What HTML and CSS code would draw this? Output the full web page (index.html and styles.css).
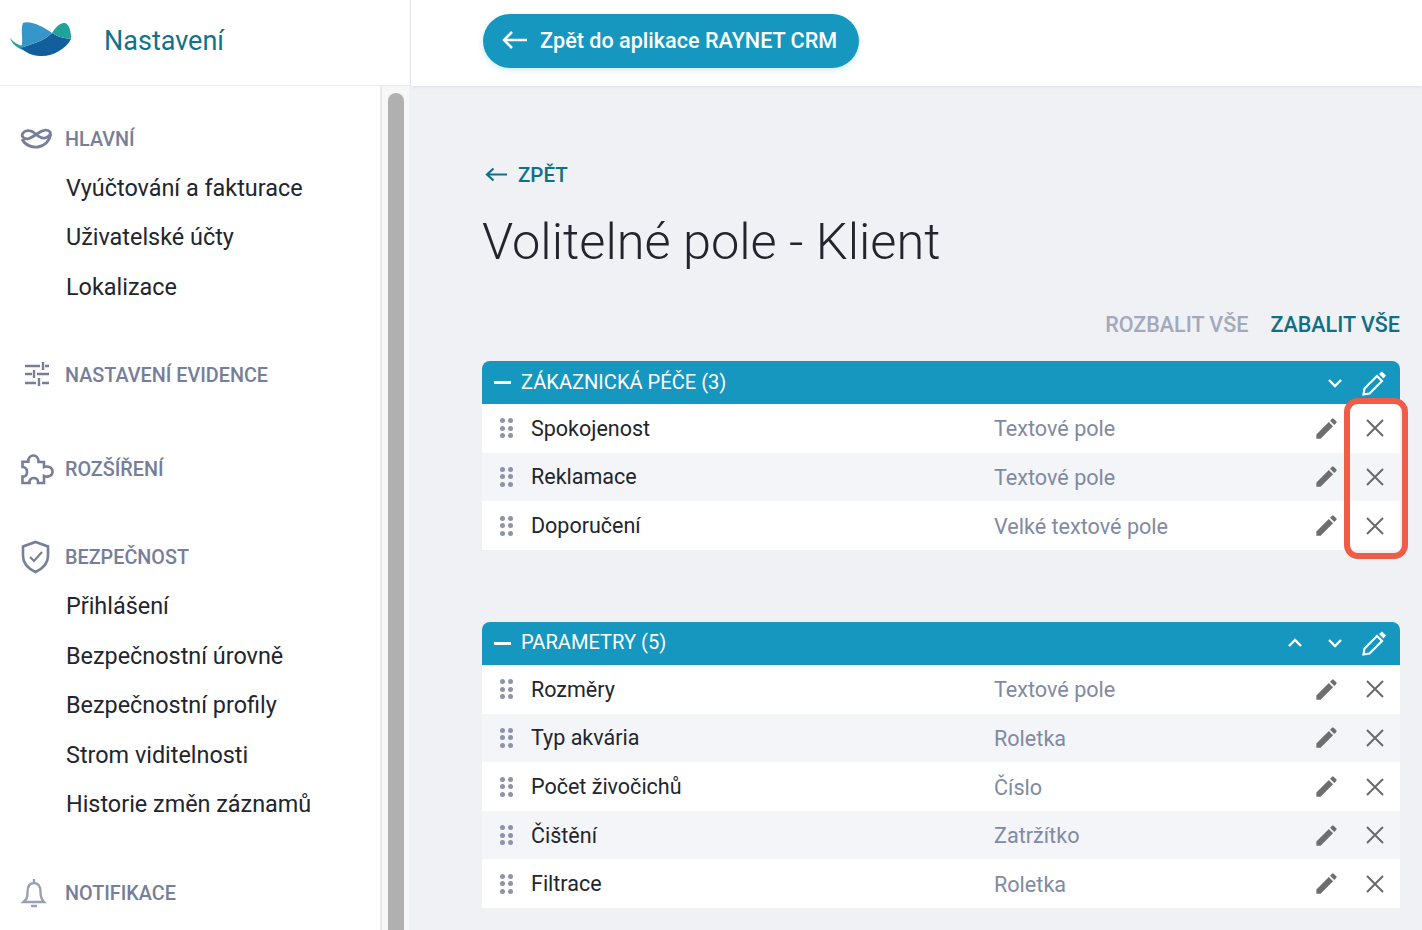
FILE: index.html
```html
<!DOCTYPE html>
<html lang="cs">
<head>
<meta charset="utf-8">
<title>Nastavení</title>
<link rel="stylesheet" href="styles.css">
</head>
<body>
<div class="app">
  <div class="brand">
    <svg class="logo" viewBox="0 0 82 60" width="82" height="60">
      <path fill="#1fa09f" d="M10 38C13 42 18 45 23 46l3 5C18 49 12 44 10 38Z"/>
      <path fill="#135f9c" d="M21 48C32 44 44 41 52 33C58 37 64 38 71 39C66 49 52 57 40 56C32 56 25 52 21 48Z"/>
      <path fill="#3695c9" d="M23 23C30 20 44 27 52 33C44 41 32 44 21 48C24 40 20 30 23 23Z"/>
      <path fill="#21a39c" d="M52 33C55 28 60 22 65 23C70 25 71 32 71 39C64 38 58 37 52 33Z"/>
    </svg>
    <span class="brand-title">Nastavení</span>
  </div>
  <header class="topbar">
    <a class="back-app">
      <svg viewBox="0 0 28 20" width="28" height="20"><path d="M26 10H3M11 2l-8 8 8 8" fill="none" stroke="#fff" stroke-width="2.6"/></svg>
      Zpět do aplikace RAYNET CRM
    </a>
  </header>
  <aside class="sidebar">
    <nav class="nav">
      <div class="nav-head nav-first">
        <svg viewBox="0 0 34 22" width="34" height="22"><path d="M8 11C3 11 1 8 3 5C5 2 10 2 13 4C17 7 20 11 25 10C29 9 31 6 30 4C28 1 23 2 20 4C17 6 13 9 8 11M2 11C5 17 12 20 18 19C24 18 29 14 31 6" fill="none" stroke="#767e9a" stroke-width="2.8"/></svg>
        HLAVNÍ
      </div>
      <a class="nav-item">Vyúčtování a fakturace</a>
      <a class="nav-item">Uživatelské účty</a>
      <a class="nav-item">Lokalizace</a>

      <div class="nav-head nav-gap-a">
        <svg class="icon-sliders" viewBox="0 0 34 26" width="34" height="26"><path d="M5 5h15M25 5h4M23 1v8M5 13h7M17 13h12M14 9v8M5 22h11M22 22h7M19 17v8" fill="none" stroke="#767e9a" stroke-width="2.4"/></svg>
        NASTAVENÍ EVIDENCE
      </div>

      <div class="nav-head nav-gap-b">
        <svg viewBox="0 0 34 32" width="34" height="32"><path d="M8.300 8.700C8 4 11 2.500 13.500 2.500C16 2.500 19 5 18.500 9L24 9L24 14C28 12.500 32.500 14.500 32.500 18.700C32.500 23 28 24.500 24 23L24 30L18 30C18.500 26 16 25 13.500 25C11 25 9 27 9.500 30L2.500 30L2.500 23.500C6 24 7 21 7 19C7 17 6 14 2.500 14L2.500 8.700Z" fill="none" stroke="#767e9a" stroke-width="2.600"/></svg>
        ROZŠÍŘENÍ
      </div>

      <div class="nav-head nav-gap-c">
        <svg viewBox="0 0 34 34" width="34" height="34"><path d="M15.500 2L28 6.500V16C28 24 22 29 15.500 32C9 29 3 24 3 16V6.500Z" fill="none" stroke="#767e9a" stroke-width="2.600"/><path d="M10 17l4 4 8-9" fill="none" stroke="#767e9a" stroke-width="2.200"/></svg>
        BEZPEČNOST
      </div>
      <a class="nav-item">Přihlášení</a>
      <a class="nav-item">Bezpečnostní úrovně</a>
      <a class="nav-item">Bezpečnostní profily</a>
      <a class="nav-item">Strom viditelnosti</a>
      <a class="nav-item">Historie změn záznamů</a>

      <div class="nav-head nav-gap-a">
        <svg viewBox="0 0 34 32" width="34" height="32"><path d="M3.500 25H24C21 22 20.500 20 20.500 15C20.500 9 18 6 14 6C10 6 7.500 9 7.500 15C7.500 20 7 22 3.500 25ZM14 6V2M11 29h6" fill="none" stroke="#9aa0b4" stroke-width="2.400"/></svg>
        NOTIFIKACE
      </div>
    </nav>
    <div class="scrolltrack"><div class="scrollthumb"></div></div>
  </aside>
  <main class="main">
    <a class="back-link">
      <svg viewBox="0 0 24 16" width="24" height="16"><path d="M23 7.500H3M9.500 1.500l-6.500 6 6.500 6" fill="none" stroke="#126f88" stroke-width="2.200"/></svg>
      ZPĚT
    </a>
    <h1 class="title">Volitelné pole - Klient</h1>
    <div class="toggles">
      <a class="toggle-off">ROZBALIT VŠE</a>
      <a class="toggle-on">ZABALIT VŠE</a>
    </div>

    <section class="group">
      <div class="group-head">
        <span class="minus"></span>
        <span class="group-title">ZÁKAZNICKÁ PÉČE (3)</span>
        <svg class="chev" viewBox="0 0 18 12" width="18" height="12"><path d="M3 3l6 6 6-6" fill="none" stroke="#fff" stroke-width="2.400"/></svg>
        <svg class="head-pen" viewBox="0 0 28 28" width="28" height="28"><path d="M3.500 25.500L4.500 19.500L17 7L22 12L9.500 24.500Z" fill="none" stroke="#fff" stroke-width="2.200"/><path d="M19 5L22 2.500L26 6.500L23.500 9.500Z" fill="#fff"/></svg>
      </div>
      <div class="row">
        <span class="grip"><i></i><i></i><i></i><i></i><i></i><i></i></span>
        <span class="name">Spokojenost</span><span class="type">Textové pole</span>
        <svg class="pen" viewBox="0 0 24 24" width="27" height="27"><path d="M3 17.250V21h3.750L17.810 9.940l-3.750-3.750L3 17.250zM20.710 7.040a1 1 0 000-1.410l-2.340-2.340a1 1 0 00-1.410 0l-1.830 1.830 3.750 3.750 1.830-1.830z"/></svg>
        <svg class="close" viewBox="0 0 20 20" width="20" height="20"><path d="M2 2l16 16M18 2L2 18"/></svg>
      </div>
      <div class="row">
        <span class="grip"><i></i><i></i><i></i><i></i><i></i><i></i></span>
        <span class="name">Reklamace</span><span class="type">Textové pole</span>
        <svg class="pen" viewBox="0 0 24 24" width="27" height="27"><path d="M3 17.250V21h3.750L17.810 9.940l-3.750-3.750L3 17.250zM20.710 7.040a1 1 0 000-1.410l-2.340-2.340a1 1 0 00-1.410 0l-1.830 1.830 3.750 3.750 1.830-1.830z"/></svg>
        <svg class="close" viewBox="0 0 20 20" width="20" height="20"><path d="M2 2l16 16M18 2L2 18"/></svg>
      </div>
      <div class="row">
        <span class="grip"><i></i><i></i><i></i><i></i><i></i><i></i></span>
        <span class="name">Doporučení</span><span class="type">Velké textové pole</span>
        <svg class="pen" viewBox="0 0 24 24" width="27" height="27"><path d="M3 17.250V21h3.750L17.810 9.940l-3.750-3.750L3 17.250zM20.710 7.040a1 1 0 000-1.410l-2.340-2.340a1 1 0 00-1.410 0l-1.830 1.830 3.750 3.750 1.830-1.830z"/></svg>
        <svg class="close" viewBox="0 0 20 20" width="20" height="20"><path d="M2 2l16 16M18 2L2 18"/></svg>
      </div>
      <div class="highlight"></div>
    </section>

    <section class="group group-second">
      <div class="group-head">
        <span class="minus"></span>
        <span class="group-title">PARAMETRY (5)</span>
        <svg class="chev" viewBox="0 0 18 12" width="18" height="12"><path d="M3 9l6-6 6 6" fill="none" stroke="#fff" stroke-width="2.400"/></svg>
        <svg class="chev chev-next" viewBox="0 0 18 12" width="18" height="12"><path d="M3 3l6 6 6-6" fill="none" stroke="#fff" stroke-width="2.400"/></svg>
        <svg class="head-pen" viewBox="0 0 28 28" width="28" height="28"><path d="M3.500 25.500L4.500 19.500L17 7L22 12L9.500 24.500Z" fill="none" stroke="#fff" stroke-width="2.200"/><path d="M19 5L22 2.500L26 6.500L23.500 9.500Z" fill="#fff"/></svg>
      </div>
      <div class="row">
        <span class="grip"><i></i><i></i><i></i><i></i><i></i><i></i></span>
        <span class="name">Rozměry</span><span class="type">Textové pole</span>
        <svg class="pen" viewBox="0 0 24 24" width="27" height="27"><path d="M3 17.250V21h3.750L17.810 9.940l-3.750-3.750L3 17.250zM20.710 7.040a1 1 0 000-1.410l-2.340-2.340a1 1 0 00-1.410 0l-1.830 1.830 3.750 3.750 1.830-1.830z"/></svg>
        <svg class="close" viewBox="0 0 20 20" width="20" height="20"><path d="M2 2l16 16M18 2L2 18"/></svg>
      </div>
      <div class="row">
        <span class="grip"><i></i><i></i><i></i><i></i><i></i><i></i></span>
        <span class="name">Typ akvária</span><span class="type">Roletka</span>
        <svg class="pen" viewBox="0 0 24 24" width="27" height="27"><path d="M3 17.250V21h3.750L17.810 9.940l-3.750-3.750L3 17.250zM20.710 7.040a1 1 0 000-1.410l-2.340-2.340a1 1 0 00-1.410 0l-1.830 1.830 3.750 3.750 1.830-1.830z"/></svg>
        <svg class="close" viewBox="0 0 20 20" width="20" height="20"><path d="M2 2l16 16M18 2L2 18"/></svg>
      </div>
      <div class="row">
        <span class="grip"><i></i><i></i><i></i><i></i><i></i><i></i></span>
        <span class="name">Počet živočichů</span><span class="type">Číslo</span>
        <svg class="pen" viewBox="0 0 24 24" width="27" height="27"><path d="M3 17.250V21h3.750L17.810 9.940l-3.750-3.750L3 17.250zM20.710 7.040a1 1 0 000-1.410l-2.340-2.340a1 1 0 00-1.410 0l-1.830 1.830 3.750 3.750 1.830-1.830z"/></svg>
        <svg class="close" viewBox="0 0 20 20" width="20" height="20"><path d="M2 2l16 16M18 2L2 18"/></svg>
      </div>
      <div class="row">
        <span class="grip"><i></i><i></i><i></i><i></i><i></i><i></i></span>
        <span class="name">Čištění</span><span class="type">Zatržítko</span>
        <svg class="pen" viewBox="0 0 24 24" width="27" height="27"><path d="M3 17.250V21h3.750L17.810 9.940l-3.750-3.750L3 17.250zM20.710 7.040a1 1 0 000-1.410l-2.340-2.340a1 1 0 00-1.410 0l-1.830 1.830 3.750 3.750 1.830-1.830z"/></svg>
        <svg class="close" viewBox="0 0 20 20" width="20" height="20"><path d="M2 2l16 16M18 2L2 18"/></svg>
      </div>
      <div class="row">
        <span class="grip"><i></i><i></i><i></i><i></i><i></i><i></i></span>
        <span class="name">Filtrace</span><span class="type">Roletka</span>
        <svg class="pen" viewBox="0 0 24 24" width="27" height="27"><path d="M3 17.250V21h3.750L17.810 9.940l-3.750-3.750L3 17.250zM20.710 7.040a1 1 0 000-1.410l-2.340-2.340a1 1 0 00-1.410 0l-1.830 1.830 3.750 3.750 1.830-1.830z"/></svg>
        <svg class="close" viewBox="0 0 20 20" width="20" height="20"><path d="M2 2l16 16M18 2L2 18"/></svg>
      </div>
    </section>
  </main>
</div>
</body>
</html>
```
FILE: styles.css
```css
* { box-sizing: border-box; }
html, body { margin: 0; height: 100%; overflow: hidden; }
body { font-family: Roboto, "Liberation Sans", sans-serif; color: #22252e; background: #fff; }
.app {
  display: grid;
  grid-template-columns: 409px 2px 1fr;
  grid-template-rows: 86px 1fr;
  height: 930px;
  width: 1422px;
  overflow: hidden;
}
.brand {
  grid-column: 1 / 3;
  display: flex;
  align-items: center;
  padding-bottom: 4px;
  border-right: 1px solid #e9eaee;
  border-bottom: 1px solid #ecedf0;
}
.logo { flex: none; margin-bottom: 21px; margin-right: 22px; }
.brand-title { font-size: 27px; color: #0f7389; }
.topbar {
  display: flex;
  align-items: flex-start;
  padding: 14px 0 0 72px;
  background: #fff;
  box-shadow: 0 1px 3px rgba(40, 50, 80, .08);
  position: relative;
}
.back-app {
  display: flex;
  align-items: center;
  gap: 11px;
  height: 54px;
  width: 376px;
  padding: 0 0 2px 18px;
  border-radius: 27px;
  background: #1597bf;
  color: #fff;
  font-size: 21.600px;
  font-weight: 500;
  box-shadow: 0 2px 6px rgba(21, 151, 191, .2);
}
.sidebar { display: flex; overflow: hidden; background: #fff; }
.nav { width: 380px; flex: none; padding: 38px 0 0 20px; }
.scrolltrack {
  width: 29px;
  flex: none;
  background: #f7f7f7;
  border-left: 2px solid #e8e8e8;
  padding: 7px 5px 0 6px;
}
.scrollthumb { height: 900px; background: #b0b0b0; border-radius: 8px; }
.nav-head {
  display: flex;
  align-items: center;
  gap: 11px;
  height: 30px;
  font-size: 19.800px;
  font-weight: 500;
  color: #767e9a;
  margin-bottom: 8.800px;
}
.nav-head svg { flex: none; }
.icon-sliders { margin-top: -4px; }
.nav-gap-a { margin-top: 49.500px; }
.nav-gap-b { margin-top: 63.500px; }
.nav-gap-c { margin-top: 58.200px; }
.nav-item {
  display: flex;
  align-items: center;
  height: 49.500px;
  padding-left: 46px;
  font-size: 23.400px;
  color: #22252e;
}
.main { grid-column: 2 / 4; background: #eff1f5; padding: 0 22px 0 73px; overflow: hidden; }
.back-link {
  display: flex;
  align-items: center;
  gap: 10px;
  margin: 74px 0 0 2px;
  height: 30px;
  font-size: 20.500px;
  font-weight: 500;
  color: #126f88;
}
.title {
  margin: 19px 0 0;
  font-size: 50.500px;
  line-height: 66px;
  font-weight: 300;
  color: #22252e;
}
.toggles {
  display: flex;
  justify-content: flex-end;
  align-items: center;
  gap: 22px;
  height: 30px;
  margin-top: 34px;
  font-size: 21.500px;
  font-weight: 500;
}
.toggle-off { color: #a3a9bb; }
.toggle-on { color: #0f6f86; }
.group { margin-top: 22px; position: relative; }
.group-second { margin-top: 72px; }
.group-head {
  display: flex;
  align-items: center;
  height: 43px;
  padding: 0 12px 0 12px;
  background: #1597bf;
  border-radius: 8px 8px 0 0;
  color: #fff;
}
.minus { width: 17px; height: 3px; background: #fff; flex: none; }
.group-title { font-size: 20.100px; margin: 0 0 2px 10px; flex: 1; }
.chev { flex: none; margin-right: 16px; }
.chev-next { margin-left: 6px; }
.head-pen { flex: none; }
.row {
  display: flex;
  align-items: center;
  height: 48.650px;
  padding: 0 15px 0 18px;
  background: #fff;
}
.row:nth-child(odd) { background: #f4f5f8; }
.grip {
  display: grid;
  grid-template-columns: 5px 5px;
  gap: 2.500px;
  flex: none;
  margin-right: 18px;
  width: 13px;
}
.grip i { display: block; width: 5px; height: 5px; border-radius: 50%; background: #8d93a8; }
.name { width: 463px; flex: none; font-size: 21.500px; color: #22252e; }
.type { flex: 1; font-size: 21.600px; color: #808aa2; margin-top: 1px; }
.pen { flex: none; fill: #6e6e6e; margin-right: 25px; }
.close { flex: none; fill: none; stroke: #6a6a6a; stroke-width: 2; }
.highlight {
  position: absolute;
  left: 862px;
  top: 37px;
  width: 64px;
  height: 161px;
  border: 6px solid #ef5c48;
  border-radius: 14px;
}
```
